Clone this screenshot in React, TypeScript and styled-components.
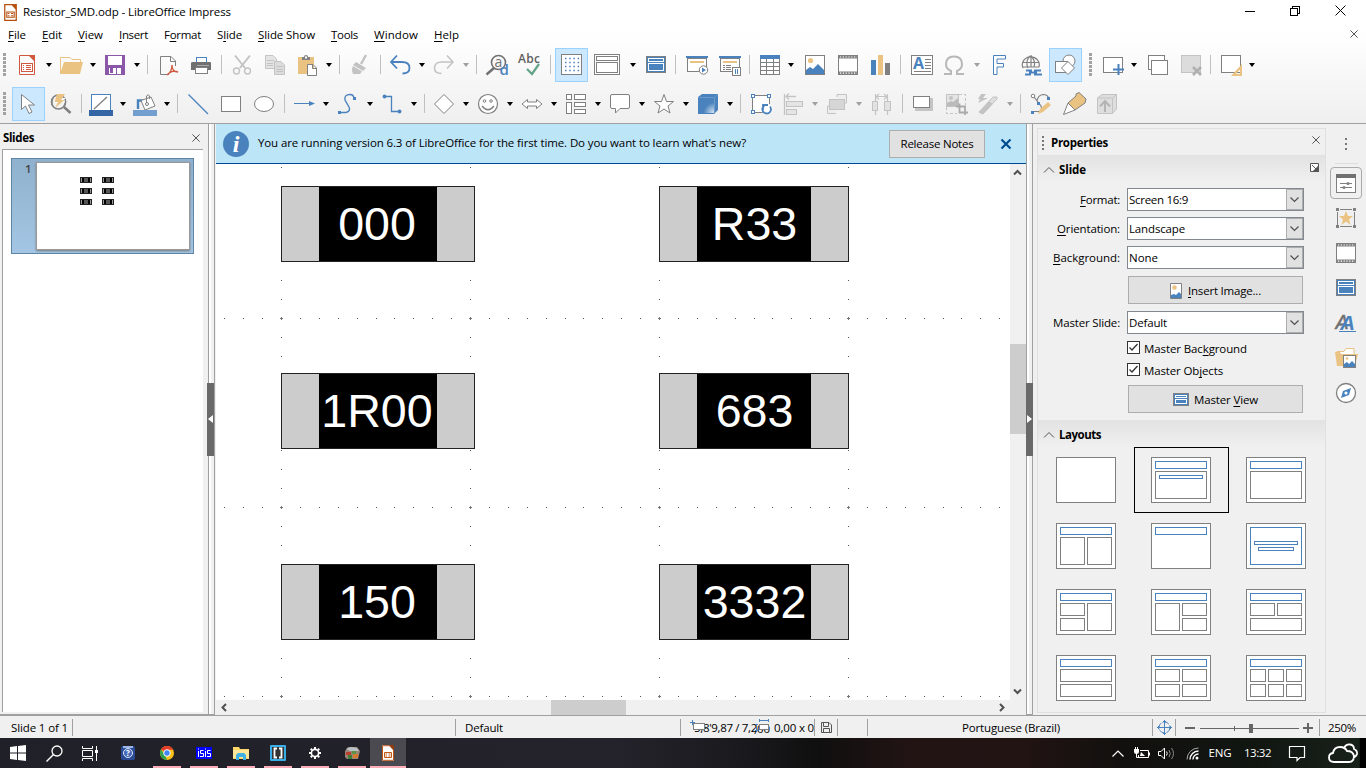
import React, { useLayoutEffect, useRef, useState } from 'react';
import styled, { createGlobalStyle } from 'styled-components';

const G = '#808080', B = '#4a82bd', T = '#eac282', D = '#c3c3c3', R = '#d0583f', LINE = '#a0a0a0';

const Global = createGlobalStyle`
  * { box-sizing: border-box; }
  body { margin: 0; overflow: hidden; background: #f0f0f0; color: #000;
    font-family: "Open Sans", "Noto Sans", sans-serif; font-size: 11.5px; line-height: 16px; }
  svg { display: block; flex: none; overflow: visible; }
  u { text-decoration-thickness: 1px; text-underline-offset: 1.5px; text-decoration-skip-ink: none; }
`;

/* ---------- text ---------- */
const TextBox = styled.span<{ $w?: number; $bold?: boolean }>`
  display: block; flex: none; white-space: pre;
  width: ${p => (p.$w ? p.$w + 'px' : 'auto')};
  font-weight: ${p => (p.$bold ? 700 : 400)};
`;
/* Text whose tracking is adjusted so that it fills the width w; "_" marks the mnemonic. */
function Text({ children, w, bold }: { children: string; w: number; bold?: boolean }) {
  const ref = useRef<HTMLSpanElement>(null);
  const [ls, setLs] = useState(0);
  useLayoutEffect(() => {
    if (ref.current) setLs((w - ref.current.getBoundingClientRect().width) / (ref.current.textContent || ' ').length);
  }, [w]);
  const i = children.indexOf('_');
  return (
    <TextBox $w={w} $bold={bold}>
      <span ref={ref} style={{ letterSpacing: ls }}>
        {i < 0 || children.includes('SMD') ? children : <>{children.slice(0, i)}<u>{children[i + 1]}</u>{children.slice(i + 2)}</>}
      </span>
    </TextBox>
  );
}

/* ---------- drawing helpers ---------- */
const P = ({ d, s = G, f = 'none', w = 1 }: { d: string; s?: string; f?: string; w?: number }) => (
  <path d={d} stroke={s} fill={f} strokeWidth={w} />
);
const Q = ({ x, y, w, h, s = G, f = '#fff', sw = 1 }: { x: number; y: number; w: number; h: number; s?: string; f?: string; sw?: number }) => (
  <rect x={x} y={y} width={w} height={h} stroke={s} fill={f} strokeWidth={sw} shapeRendering="crispEdges" />
);
const filmIcon = (
  <>
    <Q x={2.5} y={2.5} w={19} h={19} />
    <P d="M3 4H22M3 20H22" w={3} />
    <path d="M4 4H21M4 20.2H21" stroke="#fff" strokeWidth="1.2" strokeDasharray="1.2 1.6" />
  </>
);
const masterIcon = (
  <>
    <Q x={2.5} y={4.5} w={19} h={16} f={B} />
    <Q x={4.5} y={6.5} w={15} h={3} s="#fff" f={B} />
    <Q x={4.5} y={11.5} w={15} h={7} s="#fff" f={B} />
  </>
);

const icons: Record<string, React.ReactNode> = {
  new: <><P d="M13 3.5H3.5V22.5H18.5V9" s={R} /><path d="M12 3H19V10Z" fill={R} /><Q x={5.5} y={11.5} w={11} h={8} s={R} /><P d="M7 13.5H8M10 13.5H15M7 15.5H8M10 15.5H15M7 17.5H8M10 17.5H15" s={R} /></>,
  open: <><P d="M.5 21V5.500H10L12 7.500H20.500V10" s={T} /><path d="M0 22L4 10H23L20 22Z" fill={T} /></>,
  save: <><path d="M1 3H21V23H1Z" fill="#8b57a8" /><path d="M4 4H18V13H4Z" fill="#fff" /><path d="M5 16H17V23H5Z" fill="#fff" /><path d="M6 16H9V21H6Z M12 16H13V23H12Z" fill="#8b57a8" /><path d="M5 22H17V23H5Z" fill="#8b57a8" /></>,
  pdf: <><P d="M13 22.5H4.500V4.500H15L19.500 9V14M14.500 4.500V9.500H19.500" f="none" /><P d="M11 23C14 21 16 17 16 13C16 18 19 20 22 20C18 18 14 20 11 23Z" s={R} w={1.3} /></>,
  print: <><Q x={7.5} y={5.5} w={10} h={5} s={B} /><path d="M2 11Q2 10 4 10H21Q22 10 22 11V18H2Z" fill="#707070" /><Q x={6.5} y={15.5} w={12} h={6} s="#808080" /><P d="M8 13.500H20" s="#aaa" /></>,
  cut: <><P d="M5 3.500L15 16M20 3.500L10 16" s={D} w={2} /><circle cx="6.500" cy="19" r="3" stroke={D} fill="none" strokeWidth="1.400" /><circle cx="17.500" cy="19" r="3" stroke={D} fill="none" strokeWidth="1.400" /></>,
  copy: <><P d="M2.500 3.500H10L13.500 7V16.500H2.500Z" s={D} f="#e4e4e4" /><P d="M11.500 9.500H18L21.500 13V22.500H11.500Z" s={D} f="#dcdcdc" /><P d="M4 8.500H11M4 11.500H10M4 13.500H10M13.500 14.500H20M13.500 17.500H20M13.500 19.500H20" s={D} /></>,
  paste: <><path d="M2 5H18V22H2Z" fill={T} /><path d="M6 8V5H8Q8 3 10 3Q12 3 12 5H14V8Z" fill={G} /><rect x="9" y="4.500" width="2" height="2" fill="#fff" /><P d="M11.500 12.500H17L20.500 16V23.500H11.500ZM16.500 12.500V16.500H20.500" f="#fff" /></>,
  brush: <><P d="M18 3L13 12" s={D} w={2.5} /><path d="M8 10L18 16L15 19L5 13Z" fill={D} /><path d="M5 14L14 19.500L12 22H5Q3 17 5 14Z" fill={D} /></>,
  undo: <P d="M2 10H13C19 10 20.500 13 20.500 16C20.500 20 18 21.500 13.500 21.500M8 3.500L2 10L8 16.500" s={B} w={1.8} />,
  redo: <P d="M20 10H9C3 10 1.500 13 1.500 16C1.500 20 4 21.500 8.500 21.500M14 3.500L20 10L14 16.500" s={D} w={1.5} />,
  find: <><circle cx="13.500" cy="10.500" r="7" stroke="#707070" fill="none" strokeWidth="1.600" /><P d="M9 16L1.500 22.500" s="#707070" w={2.4} /><text x="9.500" y="15" fontSize="14" fill="#707070">a</text><text x="14.500" y="23" fontSize="15" fontWeight="600" fill={B}>d</text></>,
  abc: <><text x="0" y="11" fontSize="12" fontWeight="600" fill="#606060" textLength="22">Abc</text><P d="M9 17L14 22L21 12" s="#63a387" w={2.2} /></>,
  grid: <><Q x={2.5} y={2.5} w={20} h={20} />{[5, 9, 13, 17].map(y => <path key={y} d={`M6 ${y + 1.5}H21`} stroke={B} strokeWidth="1.500" strokeDasharray="1.500 2.700" />)}</>,
  views: <><Q x={2.5} y={2.5} w={25} h={20} /><Q x={4.5} y={4.5} w={21} h={4} /><Q x={4.5} y={10.5} w={21} h={10} /></>,
  master: <g transform="translate(1 0)">{masterIcon}</g>,
  play: <><path d="M2 4H24V6H2Z" fill={B} /><Q x={3.5} y={6.5} w={19} h={13} /><path d="M6 9H20V11H6Z" fill={T} /><circle cx="19.500" cy="18" r="4.200" stroke={G} fill="#fff" /><path d="M18 15.500L22 18L18 20.500Z" fill={B} /></>,
  playp: <><path d="M2 4H24V6H2Z" fill={B} /><Q x={3.5} y={6.5} w={19} h={13} /><path d="M6 9H20V11H6Z" fill={T} /><P d="M6 13.500H8M9 13.500H14M6 15.500H8M9 15.500H14M6 17.500H8M9 17.500H14" /><Q x={15.5} y={15.500} w={8} h={8} /><P d="M18.500 17V22M20.500 17V22" s={B} /></>,
  table: <><Q x={2.5} y={3.500} w={19} h={19} /><path d="M2 3H22V7H2Z" fill={B} /><P d="M3 10.500H21M3 14.500H21M3 18.500H21M8.500 7V22M15.500 7V22" /></>,
  image: <><Q x={3.5} y={3.5} w={19} h={19} /><circle cx="8.500" cy="8.500" r="2.600" fill={T} /><path d="M4 22V18L8 15L11 17L16 12L22 18V22Z" fill={B} /></>,
  film: <g transform="translate(1 1)">{filmIcon}</g>,
  filmtab: filmIcon,
  chart: <><path d="M3 8H8V23H3Z" fill={B} /><path d="M10 3H15V23H10Z" fill={T} /><path d="M17 11H22V23H17Z" fill={G} /></>,
  textbox: <><Q x={2.5} y={3.500} w={21} h={19} /><text x="4" y="17" fontSize="16" fontWeight="700" fill={B}>A</text><P d="M16 7.500H22M16 10.500H22M16 13.500H22M16 16.500H22M5 19.500H22" /></>,
  omega: <P d="M2 22H9V19Q4 17 4 12Q4 4.500 12 4.500Q20 4.500 20 12Q20 17 15 19V22H22" s="#b8b8b8" w={2} />,
  font: <P d="M6.500 3.500H18.500V7H10V11.500H16.500V15H10V22.500H6.500Z" s={B} f="#fff" />,
  link: <><P d="M3 16A8.500 8 0 1 1 19 15M3 10.500H19M3 15H19M8 16Q5 9 10 4M14 15Q16 9 11 4M11 3V15" w={1.2} /><path d="M3 16H24V24H3Z" fill="#f8f8f8" /><P d="M6 18.500H12M14 18.500H21M5 22.500H11M14 22.500H22M9 20.500H17" s={B} w={1.8} /></>,
  shapes: <><circle cx="16" cy="9" r="6" stroke={G} fill="#fff" /><Q x={2.5} y={9.500} w={12} h={11} /><P d="M15 9.500L21.500 16L15 22.500L8.500 16Z" f="#fff" /></>,
  newslide: <><Q x={2.5} y={5.500} w={19} h={15} /><P d="M17.500 12V23M12 17.500H23" s={B} w={2} /></>,
  dup: <><Q x={3.5} y={3.5} w={16} h={14} /><Q x={6.5} y={8.5} w={16} h={14} /></>,
  del: <><Q x={3.5} y={3.5} w={19} h={17} s={D} f="#dcdcdc" /><P d="M15 15L23 23M23 15L15 23" s="#b0b0b0" w={2.6} /></>,
  layout: <><Q x={2.5} y={3.5} w={19} h={17} /><path fillRule="evenodd" d="M12 24H23V12ZM17 22L21 17.500V22Z" fill={T} /></>,
  pointer: <P d="M5.500 3.500V18.500L9.500 15L13 22.500L16 21L12.500 14H18.500Z" f="#fff" />,
  zoom: <><circle cx="9.500" cy="11" r="7" stroke={G} fill="none" strokeWidth="1.600" /><path d="M5 7H16V12H5Z" fill="#fafafa" /><P d="M4 7Q2 10 3 14M16 8Q17.500 12 15 15" w={1.4} /><P d="M15 16L21.500 22" w={2.6} /><path d="M8 3H16L12 9H15.500L6 17L9 11H5.500Z" fill={T} /></>,
  linecol: <><Q x={1.5} y={3.5} w={19} h={16} s={B} /><P d="M4 18L17 6" w={1.3} /><path d="M-1 19H23V25H-1Z" fill="#3465a4" /></>,
  fill: <><P d="M4 18V9.500H10" s={B} w={2.4} /><P d="M7 9.500L17 6L21 15L11 19Z" f="#fff" /><P d="M12.500 12V5Q14.500 2.500 15.500 5V8" /><circle cx="13" cy="13" r="1.500" stroke={G} fill="#fff" /><path d="M-1 19H23V25H-1Z" fill="#729fcf" /></>,
  line: <P d="M2.500 3.500L22 23" s={B} w={1.2} />,
  rect: <Q x={2.500} y={5.500} w={19} h={15} />,
  ellipse: <ellipse cx="12" cy="13" rx="9.500" ry="7.500" fill="#fff" stroke={G} />,
  arrow: <><P d="M1 12.500H18" s={B} /><path d="M16 10L22 12.500L16 15Z" fill={B} /></>,
  curve: <><P d="M3 21.500H9Q14 20 12 16L8 9Q7 3.500 13 3.500Q17 3.500 17 8" s={B} w={1.4} /><path d="M1 20H4V23H1ZM16 6H19V9H16Z" fill={B} /></>,
  conn: <><P d="M3 5.500H10.500V20.500H18" s={B} w={1.3} /><circle cx="3.500" cy="5.500" r="1.900" fill={B} /><circle cx="18.500" cy="20.500" r="1.900" fill={B} /></>,
  diamond: <P d="M11 3.500L20.500 13L11 22.500L1.500 13Z" f="#fff" />,
  smile: <><circle cx="11" cy="13" r="9.500" stroke={G} fill="#fff" strokeWidth="1.200" /><circle cx="7.500" cy="10" r="1.300" stroke={G} fill="#fff" /><circle cx="14" cy="10" r="1.300" stroke={G} fill="#fff" /><P d="M5 15Q11 22.500 17 15" w={1.3} /></>,
  dbl: <P d="M1 13L6.500 8.500V11H15.500V8.500L21 13L15.500 17.500V15H6.500V17.500Z" f="#fff" />,
  flow: <><Q x={1.5} y={3.500} w={5} h={5} /><Q x={9.500} y={3.500} w={11} h={5} /><Q x={1.5} y={11.500} w={5} h={11} /><Q x={9.500} y={11.500} w={11} h={4} /><Q x={9.500} y={18.500} w={11} h={4} /></>,
  bubble: <P d="M3 3.500H19Q20.500 3.500 20.500 5V16Q20.500 17.500 19 17.500H11L6.500 22V17.500H3Q1.500 17.500 1.500 16V5Q1.500 3.500 3 3.500Z" f="#fff" />,
  star: <P d="M11 3.500L13.500 10.500H20.500L15 15L17 22L11 18L5 22L7 15L1.500 10.500H8.500Z" f="#fff" />,
  cube: <><defs><radialGradient id="cg" cx="1" cy="1" r=".7"><stop offset="0" stopColor="#dbe8f5" /><stop offset="1" stopColor={B} /></radialGradient></defs><path d="M1 6L5 3H21V19L17 23H1Z" fill={B} /><path d="M2 7H17V22H2Z" fill="url(#cg)" /><P d="M1 6.500H17.500V23M17.500 6.500L21 3" s="#79a4d0" w={.7} /></>,
  rotate: <><Q x={3.500} y={4.500} w={17} h={17} /><Q x={2.500} y={3.500} w={3} h={3} s={B} /><Q x={18.500} y={3.500} w={3} h={3} s={B} /><Q x={2.500} y={19.500} w={3} h={3} s={B} /><circle cx="18" cy="18" r="5.500" fill="#fff" /><P d="M15.500 14.500A4.300 4.300 0 1 0 21 15.500M14 19V14H19" s={B} w={1.8} /></>,
  align: <><P d="M2.500 3V24" s={D} w={1.3} /><P d="M4 5.500H14M7 2.500L4 5.500L7 8.500" s={D} w={1.3} /><Q x={4.500} y={10.500} w={16} h={5} s={D} f="#e4e4e4" /><Q x={4.500} y={18.500} w={10} h={5} s={D} f="#e4e4e4" /></>,
  arrange: <><P d="M11 6V3.500H20.500V12H18M10 22.500H1.500V15H4" s={D} f="#eee" /><Q x={3.500} y={8.500} w={15} h={10} s={D} f="#d6d6d6" /></>,
  dist: <><P d="M5.500 3V24M17.500 3V24M6 5.500H17M9 3L6 6L9 8.500M14 3L17 6L14 8.500" s={D} w={1.2} /><Q x={2.500} y={10.500} w={5} h={9} s={D} f="#e2e2e2" /><Q x={14.500} y={10.500} w={6} h={9} s={D} f="#e2e2e2" /></>,
  shadow: <><path d="M4 7H22V20H4Z" fill="#c4c4c4" /><Q x={2.500} y={5.500} w={16} h={11} /></>,
  crop: <><Q x={2.500} y={3.500} w={12} h={12} s={D} f="#e4e4e4" /><circle cx="7" cy="7" r="2" fill={D} /><path d="M3 15V12L7 10L9 11L14 7V15Z" fill="#bbb" /><path d="M15 3.500H21.500V14M2.500 16V22.500H13" stroke={D} fill="none" strokeDasharray="3 2" /><P d="M12 15.500H21V24M15.500 12.500V21.500H24" s="#aaa" w={1.8} /></>,
  filter: <><path d="M4 3H9L6 7H11L1 12L3 8H1Z" fill={D} /><P d="M2 21L16 6L20 6L20 8L6 23Z" s={D} f="#ddd" /><P d="M2 21L12 11L15 13L6 23Z" s={D} f={D} /></>,
  points: <><circle cx="4" cy="5" r="1.800" stroke={G} fill="#fff" /><P d="M5 6L12 15Q14 20 10 20.500H4M8 10Q9 4 14 3.500Q19 3.500 20 8" w={1.2} /><path d="M8 11H11V14H8ZM18 6H21V9H18ZM2 20H5V23H2Z" fill={B} /><path d="M9 23L11 18L19 11L22 14L14 21Z" fill={T} /></>,
  glue: <><P d="M14 3L17 1.500L24 8L23 12L13 19L6 12L14 5Z" f={T} /><P d="M6 12L13 19L1.500 23.500Z" f="#fff" /></>,
  extrude: <><P d="M2.500 7L7 3.500H21.500V18L17.500 22.500H2.500ZM2.500 7H17.500V22M17.500 7L21.500 3.500" s={D} f="#dedede" /><P d="M10 21V11M5 15.500L10 10L15 15.500" s="#b4b4b4" w={2} /></>,
  props: <><Q x={2.5} y={3.500} w={19} h={18} /><path d="M2 3H22V7H2Z" fill="#707070" /><P d="M6 12.500H18M6 16.500H18" /><circle cx="14" cy="12.500" r="1.600" fill={G} /><circle cx="10" cy="16.500" r="1.600" fill={G} /></>,
  anim: <><P d="M3.500 6V20M20.500 6V20M6 3.500H18M6 20.500H18" /><path d="M2 2H5V5H2ZM19 2H22V5H19ZM2 19H5V22H2ZM19 19H22V22H19Z" fill={G} /><path d="M12 5L14 10H19L15 13.500L16.500 19L12 15.500L7.500 19L9 13.500L5 10H10Z" fill={T} /></>,
  styles: <><text x="1.500" y="17.500" fontFamily="Liberation Sans" fontSize="20" fontStyle="italic" fontWeight="400" stroke="#707070" strokeWidth=".5" fill="#707070" textLength="13" lengthAdjust="spacingAndGlyphs">A</text><text x="6" y="18.500" fontFamily="Liberation Sans" fontSize="21" fontStyle="italic" fontWeight="700" fill={B} textLength="15" lengthAdjust="spacingAndGlyphs">A</text><P d="M5 20.500H22" s={B} /></>,
  gallery: <><P d="M3 8V5.500H10L12 2.500H20V8" s={T} f="#fff" /><path d="M1 6H6L7 8H24L21 20H3Z" fill={T} /><Q x={9.500} y={9.500} w={12} h={12} /><circle cx="13" cy="12.500" r="1.300" fill={T} /><path d="M10 21V18L13 16L15 18L18 15L21 18V21Z" fill={B} /></>,
  nav: <><circle cx="12" cy="12" r="9.500" stroke={G} fill="#fff" strokeWidth="1.300" /><path d="M17 7L15 14L7 17L9 10Z" fill={B} /><circle cx="12" cy="12" r="1.600" fill="#fff" /></>,
  mastertab: <g transform="translate(0 -1)">{masterIcon}</g>,
};
const Icon = ({ n }: { n: string }) => <svg width="25" height="25" viewBox="0 0 25 25">{icons[n]}</svg>;
const Cross = ({ size, c, w = 1 }: { size: number; c: string; w?: number }) => (
  <svg width={size} height={size} viewBox="0 0 10 10"><path d="M.5 .5L9.500 9.500M9.500 .5L.5 9.500" stroke={c} strokeWidth={(w * 10) / size} /></svg>
);

/* ---------- window frame ---------- */
const Window = styled.div`width: 1366px; height: 768px; display: flex; flex-direction: column; overflow: hidden;`;
const Top = styled.div`
  height: 124px; flex: none; border-bottom: 1px solid ${LINE};
  background: linear-gradient(#fff 0 24px, #fefefe 40px, #efefef);
`;
const TitleBar = styled.div`height: 24px; display: flex; align-items: center; padding: 0 20px 0 4px; gap: 6px;`;
const WinButtons = styled.div`margin-left: auto; display: flex; align-items: center; gap: 35px; padding-bottom: 3px;`;
const MenuBar = styled.div`height: 21px; display: flex; align-items: center; gap: 16px; padding: 1px 8px 0 8px;`;
const MenuClose = styled.div`margin-left: auto; padding-bottom: 3px;`;
const Toolbar = styled.div`height: 39px; padding: 3px 0 0 3px; display: flex; align-items: flex-start;`;
const Handle = styled.div<{ $inner?: boolean }>`
  width: 3px; height: 23px; flex: none; margin: ${p => (p.$inner ? '5px 5px 0 7px' : '5px 6px 0 0')};
  background: repeating-linear-gradient(#a2a2a2 0 3px, transparent 3px 4px);
`;
const ToolButton = styled.div<{ $on?: boolean; $w?: number }>`
  width: ${p => p.$w || 33}px; height: 34px; flex: none; padding: 3px;
  border: 1px solid ${p => (p.$on ? '#99d1ff' : 'transparent')};
  background: ${p => (p.$on ? '#cce8ff' : 'transparent')};
`;
const Drop = styled.div<{ $off?: boolean; $w?: number }>`
  width: ${p => p.$w || 11}px; height: 34px; flex: none; display: flex; align-items: center; padding-left: ${p => (p.$w ? p.$w - 9.5 : 1)}px;
  &::before { content: ''; border: 3px solid transparent; border-top: 4px solid ${p => (p.$off ? '#a0a0a0' : '#000')}; border-bottom: 0; }
`;
const Sep = styled.div`width: 1px; height: 19px; margin: 7px 4px 0 3px; background: #c0c0c0; flex: none;`;

const bar1 = 'new v open v save v | pdf print | cut copy paste v | brush | undo v redo x | find abc | grid* views V master | play playp | table v image film chart | textbox omega X font link shapes* # newslide v dup del | layout v';
const bar2 = 'pointer* zoom | linecol v fill v | line rect ellipse | arrow v curve v conn v | diamond v smile v dbl v flow v bubble v star v cube v | rotate align x arrange x dist | shadow crop filter x | points glue extrude';
const Tools = ({ spec }: { spec: string }) => (
  <Toolbar>
    <Handle />
    {spec.split(' ').map((t, i) => {
      if (t === '|') return <Sep key={i} />;
      if (t === '#') return <Handle key={i} $inner />;
      if (t === 'v' || t === 'x') return <Drop key={i} $off={t === 'x'} />;
      if (t === 'V') return <Drop key={i} $w={13} />;
      if (t === 'X') return <Drop key={i} $off $w={12} />;
      const n = t.replace('*', '');
      return <ToolButton key={i} $on={t !== n} $w={n === 'views' ? 38 : 33}><Icon n={n} /></ToolButton>;
    })}
  </Toolbar>
);

/* ---------- middle ---------- */
const Middle = styled.div`height: 592px; flex: none; display: flex; border-bottom: 1px solid ${LINE};`;
const SlidesPane = styled.div`width: 208px; height: 591px; display: flex; flex-direction: column; padding: 1px 0 0 2px; border-bottom: 1px solid ${LINE};`;
const PaneHead = styled.div`height: 24px; display: flex; justify-content: space-between; align-items: center; padding: 1px 8px 0 1px;`;
const SlideList = styled.div`width: 201px; height: 563px; background: #fff; border-left: 1px solid ${LINE}; border-top: 1px solid ${LINE}; padding: 8px;`;
const SlideItem = styled.div`
  width: 183px; height: 96px; border: 1px solid #5d85a6; background: linear-gradient(#8fb1cd, #a3c6e4);
  display: flex; justify-content: space-between; padding: 3px 3px 0 13px; color: #444; font-weight: 600; line-height: 13px;
`;
const Thumb = styled.div`width: 154px; height: 88px; background: #fff; border: 1px solid #999; box-shadow: 0 1px 2px #777; padding: 14px 0 0 43px; display: grid; grid-template-columns: 12px 12px; grid-auto-rows: 6px; gap: 5px 10px; align-content: start;`;
const Chip = styled.div`background: linear-gradient(90deg, #999 1px, #000 1px 3px, #555 3px 7px, #000 7px 9px, #999 9px); border: 1px solid #222;`;
const Splitter = styled.div`width: 7px; height: 591px; flex: none; border: solid ${LINE}; border-width: 0 1px; background: linear-gradient(90deg, #fff 2px, #f0f0f0 2px); display: flex; align-items: center; border-bottom-width: 1px;`;
const Grip = styled.div<{ $right?: boolean }>`
  width: 7px; height: 73px; margin: 0 -1px 0 ${p => (p.$right ? -1 : -2)}px; flex: none; background: #696969; display: flex; align-items: center; justify-content: center;
  &::before { content: ''; border: 4px solid transparent; ${p => (p.$right ? 'border-left: 5px solid #fff; border-right: 0' : 'border-right: 5px solid #fff; border-left: 0')}; }
`;
const Editor = styled.div`width: 811px; flex: none; display: flex; flex-direction: column; padding-left: 1px;`;
const InfoBar = styled.div`height: 40px; flex: none; background: #bde5f8; border-bottom: 1px solid #004b8f; display: flex; align-items: center; padding: 0 15px 0 7px;`;
const InfoText = styled.div`margin-left: 9px; flex: 1; padding-bottom: 1px;`;
const Button = styled.div<{ $w: number; $h: number; $gap?: number }>`
  width: ${p => p.$w}px; height: ${p => p.$h}px; border: 1px solid #adadad; background: #e1e1e1; padding-top: 1px;
  display: flex; align-items: center; justify-content: center; gap: ${p => p.$gap || 0}px;
`;
const InfoClose = styled.div`margin-left: 16px;`;
const CanvasRow = styled.div`height: 536px; display: flex;`;
const Canvas = styled.div`width: 794px; height: 536px; background: #fff; position: relative; overflow: hidden;`;
const Resistor = styled.div<{ $x: number; $y: number; $w: number; $right: number }>`
  position: absolute; left: ${p => p.$x}px; top: ${p => p.$y}px; width: ${p => p.$w}px; height: 76px;
  border: 1px solid #222; background: #ccc; padding: 0 ${p => p.$right}px 0 37px;
`;
const Body = styled.div<{ $pl: number; $pr: number }>`
  height: 100%; background: #000; color: #fff; display: flex; align-items: center; justify-content: center; white-space: nowrap;
  font: 46.6px/74px "Liberation Sans", Arial, sans-serif; margin: 0 -2px 0 0; padding: 0 ${p => p.$pr}px 0 ${p => p.$pl}px;
`;
const VScroll = styled.div`width: 16px; height: 536px; background: #f0f0f0; display: flex; flex-direction: column; align-items: center; padding: 4px 1px 0 0;`;
const VThumb = styled.div`width: 16px; height: 90px; background: #cdcdcd; margin: 167px -1px 253px 0; flex: none;`;
const HScroll = styled.div`height: 15px; display: flex; align-items: center; padding-left: 4px;`;
const HThumb = styled.div`width: 75px; height: 15px; background: #cdcdcd; margin: 0 371px 0 322px; flex: none;`;
const Chev = ({ d, w = 2, c = '#505050' }: { d: string; w?: number; c?: string }) => <svg width="9" height="9" viewBox="0 0 9 9"><path d={d} fill="none" stroke={c} strokeWidth={w} /></svg>;

const parts = [
  [65, 22, '000'], [443, 22, 'R33'], [65, 209, '1R00'], [443, 209, '683'], [65, 400, '150'], [443, 400, '3332'],
] as const;
const dots: React.ReactNode[] = [];
[154, 343, 532].forEach(y => {
  for (let i = -3; i < 39; i++) dots.push(<rect key={`h${y}${i}`} x={Math.round(65 + i * 18.9)} y={y} width="1" height="1" />);
});
[65, 254, 443, 632].forEach(x => {
  for (let j = -8; j < 21; j++) dots.push(<rect key={`v${x}${j}`} x={x} y={Math.round(154 + j * 18.9)} width="1" height="1" />);
  [154, 343, 532].forEach(y => dots.push(<path key={`c${x}${y}`} fill="#777" d={`M${x - 1} ${y}h3v1h-3zM${x} ${y - 1}h1v3h-1z`} />));
});

/* ---------- sidebar ---------- */
const Sidebar = styled.div`width: 289px; height: 585px; margin: 4px 0 0 4px; border: 1px solid #e0e0e0; flex: none;`;
const SideTitle = styled.div`height: 26px; display: flex; align-items: center; padding: 1px 5px 0 4px;`;
const Dots = styled.div`width: 2px; height: 14px; background: repeating-linear-gradient(#777 0 2px, transparent 2px 4px); margin-right: 7px;`;
const Push = styled.div`margin-left: auto; padding-bottom: 5px;`;
const Section = styled.div`height: 27px; background: linear-gradient(#e2e2e2, #f0f0f0); display: flex; align-items: center; padding: 2px 6px 0 6px; gap: 5px;`;
const Form = styled.div`height: 238px; padding: 6px 21px 0 0; display: flex; flex-direction: column; align-items: flex-end;`;
const Row = styled.div<{ $mb?: number }>`display: flex; align-items: center; gap: 7px; margin-bottom: ${p => p.$mb ?? 6}px;`;
const Combo = styled.div`width: 177px; height: 23px; border: 1px solid #828790; background: #fff; display: flex; align-items: center; justify-content: space-between; padding-left: 1px;`;
const ComboBtn = styled.div`width: 17px; height: 21px; background: #e1e1e1; border: 1px solid #adadad; display: flex; align-items: center; justify-content: center;`;
const BtnRow = styled.div<{ $mb: number }>`margin: 1px 1px ${p => p.$mb}px 0;`;
const Check = styled.div<{ $mb: number }>`
  width: 177px; height: 13px; display: flex; align-items: center; gap: 4px; margin-bottom: ${p => p.$mb}px;
  > span { margin-top: 2px; }
`;
const CheckBox = styled.div`width: 13px; height: 13px; border: 1px solid #333; background: #fff;`;
const Layouts = styled.div`display: grid; grid-template-columns: repeat(3, 95px); grid-auto-rows: 66px; margin-left: 1px;`;
const LayoutCell = styled.div<{ $on?: boolean }>`border: 1px solid ${p => (p.$on ? '#000' : 'transparent')}; padding: 9px 0 0 16px;`;
const Tabs = styled.div`width: 40px; display: flex; flex-direction: column; align-items: center; padding-top: 14px;`;
const TabDots = styled.div`width: 2px; height: 12px; background: repeating-linear-gradient(#777 0 2px, transparent 2px 5px);`;
const TabRule = styled.div`width: 23px; height: 1px; background: #ddd; margin: 13px 0 3px;`;
const Tab = styled.div<{ $on?: boolean }>`width: 32px; height: 32px; padding: 3px; margin-bottom: 3px; border: 1px solid ${p => (p.$on ? '#aaa' : 'transparent')}; border-radius: 4px;`;

const boxes: number[][][] = [
  [], [[4, 14, 51, 27], [8, 18, 43, 3, 1]], [[4, 14, 51, 27]],
  [[4, 14, 24, 27], [31, 14, 24, 27]], [], [[4, 4, 51, 37, 1], [8, 18, 43, 3, 1], [12, 24, 35, 3, 1]],
  [[4, 14, 24, 12], [4, 29, 24, 12], [31, 14, 24, 27]], [[4, 14, 24, 27], [31, 14, 24, 12], [31, 29, 24, 12]], [[4, 14, 24, 12], [31, 14, 24, 12], [4, 29, 51, 12]],
  [[4, 14, 51, 12], [4, 29, 51, 12]], [[4, 14, 24, 12], [31, 14, 24, 12], [4, 29, 24, 12], [31, 29, 24, 12]],
  [[4, 14, 15, 12], [22, 14, 15, 12], [40, 14, 15, 12], [4, 29, 15, 12], [22, 29, 15, 12], [40, 29, 15, 12]],
];
const Field = ({ label, lw, value, vw, mb }: { label: string; lw: number; value: string; vw: number; mb?: number }) => (
  <Row $mb={mb}><Text w={lw}>{label}</Text><Combo><Text w={vw}>{value}</Text><ComboBtn><Chev d="M.5 2.500L4.500 6.500L8.500 2.500" w={1.2} /></ComboBtn></Combo></Row>
);
const Tick = () => <CheckBox><svg width="11" height="11"><path d="M1.500 5.500L4 8L9.500 2" stroke="#333" strokeWidth="1.300" fill="none" /></svg></CheckBox>;

/* ---------- status bar ---------- */
const Status = styled.div`height: 22px; flex: none; display: flex; align-items: center;`;
const Cell = styled.div<{ $w: number; $pl?: number; $end?: boolean }>`
  width: ${p => p.$w}px; height: 17px; flex: none; display: flex; align-items: center; padding: 2px 0 0 ${p => p.$pl || 0}px; overflow: hidden;
  border-right: ${p => (p.$end ? '0' : '1px solid ' + LINE)};
`;
const Glyph = styled.div`padding-bottom: 2px;`;
const Position = styled(Cell)`position: relative; gap: 17px;`;
const Overlay = styled.svg`position: absolute; left: 9px; top: 0;`;

/* ---------- task bar ---------- */
const Taskbar = styled.div`
  height: 30px; flex: none; display: flex; color: #fff;
  background: linear-gradient(90deg, #202028, #24232b 45%, #1c1b20 53%, #100f0f 60%, #231414 67%, #211413 75%, #12100e 82%, #111611 92%, #182119 99.500%, #000 99.600%);
`;
const Task = styled.div<{ $w?: number; $run?: boolean; $on?: boolean }>`
  width: ${p => p.$w || 37}px; height: 30px; flex: none; display: flex; align-items: center; justify-content: center;
  background: ${p => (p.$run ? `linear-gradient(#ffadb9, #ffadb9) center bottom / ${p.$on ? 36 : 28}px 2px no-repeat` : 'none')} ${p => (p.$on ? '#4a4a50' : '')};
`;
const Tray = styled.div`margin-left: auto; display: flex; align-items: center; padding-right: 7px;`;
const TrayItem = styled.div<{ $w: number; $ml?: number }>`width: ${p => p.$w}px; margin-left: ${p => p.$ml || 0}px; display: flex; justify-content: center; flex: none;`;

const Doc = () => (
  <svg width="16" height="16" viewBox="0 0 16 16"><path d="M2 .2H9.500L14 5V15.800H2Z" fill="#fff" /><path d="M2.500 .7H9.500L13.500 5V15.300H2.500Z" fill="#fff" stroke="#c15514" strokeWidth="1" /><path d="M9 0H14V5.500Z" fill="#8c3d10" /><path d="M4.500 7.500H11.500V12.500H4.500ZM5.500 9H7M8.500 9H10.500M5.500 11H7M8.500 11H10.500" stroke="#c15514" fill="none" /></svg>
);

export default function App() {
  const menus: [string, number][] = [['_File', 18], ['_Edit', 20], ['_View', 25], ['_Insert', 29], ['F_ormat', 37], ['S_lide', 25], ['_Slide Show', 57], ['_Tools', 27], ['_Window', 44], ['_Help', 25]];
  return (
    <Window>
      <Global />
      <Top>
        <TitleBar>
          <svg width="13" height="17" viewBox="2 0 12 16"><path d="M2.600 .6H9.500L13.400 5V15.400H2.600Z" fill="#fff" stroke="#b5500f" strokeWidth="1.200" /><path d="M9 0H14V5.500Z" fill="#b5500f" /><path d="M4.500 7.500H11.500V12.500H4.500ZM5.500 9H7M8.500 9H10.500M5.500 11H7M8.500 11H10.500" stroke="#b5500f" fill="none" /></svg>
          <Text w={208}>Resistor_SMD.odp - LibreOffice Impress</Text>
          <WinButtons>
            <svg width="10" height="10"><path d="M0 5.500H10" stroke="#000" /></svg>
            <svg width="10" height="10"><path d="M.5 2.500H7.500V9.500H.5ZM2.500 2V.5H9.500V7.500H8" stroke="#000" fill="none" shapeRendering="crispEdges" /></svg>
            <Cross size={11} c="#000" />
          </WinButtons>
        </TitleBar>
        <MenuBar>
          {menus.map(([m, w]) => <Text key={m} w={w}>{m}</Text>)}
          <MenuClose><Cross size={8} c="#555" /></MenuClose>
        </MenuBar>
        <Tools spec={bar1} />
        <Tools spec={bar2} />
      </Top>

      <Middle>
        <SlidesPane>
          <PaneHead><Text w={31} bold>Slides</Text><Cross size={8} c="#555" /></PaneHead>
          <SlideList>
            <SlideItem>1<Thumb>{parts.map(p => <Chip key={p[2]} />)}</Thumb></SlideItem>
          </SlideList>
        </SlidesPane>
        <Splitter><Grip /></Splitter>
        <Editor>
          <InfoBar>
            <svg width="26" height="26"><circle cx="13" cy="13" r="13" fill="#4a82bd" /><text x="13" y="21" textAnchor="middle" fontFamily="Liberation Serif, serif" fontStyle="italic" fontWeight="700" fontSize="24" fill="#fff">i</text></svg>
            <InfoText><Text w={488}>You are running version 6.3 of LibreOffice for the first time. Do you want to learn what's new?</Text></InfoText>
            <Button $w={96} $h={28}><Text w={73}>Release Notes</Text></Button>
            <InfoClose><Cross size={10} c="#004b8f" w={2.2} /></InfoClose>
          </InfoBar>
          <CanvasRow>
            <Canvas>
              <svg width="794" height="536" fill="#555" shapeRendering="crispEdges">{dots}</svg>
              {parts.map(([x, y, t]) => (
                <Resistor key={t} $x={x} $y={y} $w={x < 100 ? 194 : 190} $right={39}>
                  <Body $pl={x < 100 ? 0 : 1} $pr={x < 100 ? 2 : 0}>{t}</Body>
                </Resistor>
              ))}
            </Canvas>
            <VScroll><Chev d="M1 6.500L4.500 3L8 6.500" /><VThumb /><Chev d="M1 2.500L4.500 6L8 2.500" /></VScroll>
          </CanvasRow>
          <HScroll><Chev d="M6 1L2.500 4.500L6 8" /><HThumb /><Chev d="M3 1L6.500 4.500L3 8" /></HScroll>
        </Editor>
        <Splitter><Grip $right /></Splitter>
        <Sidebar>
          <SideTitle><Dots /><Text w={57} bold>Properties</Text><Push><Cross size={8} c="#555" /></Push></SideTitle>
          <Section>
            <svg width="10" height="6"><path d="M0 5.500L5 .5L10 5.500" stroke="#555" fill="none" /></svg>
            <Text w={27} bold>Slide</Text>
            <Push><svg width="9" height="9"><path d="M.5 .5H8.500V8.500H.5Z" fill="#fff" stroke="#555" /><path d="M9 2V9H2Z" fill="#555" /><path d="M2 2L6 6" stroke="#555" /></svg></Push>
          </Section>
          <Form>
            <Field label="_Format:" lw={40} value="Screen 16:9" vw={59} />
            <Field label="_Orientation:" lw={63} value="Landscape" vw={56} />
            <Field label="_Background:" lw={67} value="None" vw={29} />
            <BtnRow $mb={7}>
              <Button $w={175} $h={28} $gap={6}>
                <svg width="12" height="16"><path d="M.5 .5H11.500V15.500H.5Z" fill="#fff" stroke={G} /><circle cx="4.500" cy="4.500" r="2.300" fill={T} /><path d="M1 15V12L4 11L6 12L9 9L11 11V15Z" fill={B} /></svg>
                <Text w={73}>_Insert Image...</Text>
              </Button>
            </BtnRow>
            <Field label="Master Slide:" lw={67} value="Default" vw={38} mb={7} />
            <Check $mb={9}><Tick /><Text w={103}>Master Bac_kground</Text></Check>
            <Check $mb={8}><Tick /><Text w={79}>Master Ob_jects</Text></Check>
            <BtnRow $mb={7}>
              <Button $w={175} $h={28} $gap={5}>
                <svg width="16" height="13"><Q x={.5} y={.5} w={15} h={12} f={B} /><Q x={2.5} y={2.5} w={11} h={2} s="#fff" f={B} /><Q x={2.5} y={6.5} w={11} h={4} s="#fff" f={B} /></svg>
                <Text w={64}>Master _View</Text>
              </Button>
            </BtnRow>
          </Form>
          <Section>
            <svg width="10" height="6"><path d="M0 5.500L5 .5L10 5.500" stroke="#555" fill="none" /></svg>
            <Text w={42} bold>Layouts</Text>
          </Section>
          <Layouts>
            {boxes.map((bs, i) => (
              <LayoutCell key={i} $on={i === 1}>
                <svg width="60" height="46">
                  <Q x={.5} y={.5} w={59} h={45} />
                  {i !== 0 && i !== 5 && <Q x={4.5} y={4.5} w={51} h={7} s={B} />}
                  {bs.map((b, j) => <Q key={j} x={b[0] + .5} y={b[1] + .5} w={b[2]} h={b[3]} s={b[4] ? B : G} />)}
                </svg>
              </LayoutCell>
            ))}
          </Layouts>
        </Sidebar>
        <Tabs>
          <TabDots /><TabRule />
          {['props', 'anim', 'filmtab', 'mastertab', 'styles', 'gallery', 'nav'].map((n, i) => <Tab key={n} $on={i === 0}><Icon n={n} /></Tab>)}
        </Tabs>
      </Middle>

      <Status>
        <Cell $w={73} $pl={11}><Text w={57}>Slide 1 of 1</Text></Cell>
        <Cell $w={383} />
        <Cell $w={225} $pl={9}><Text w={38}>Default</Text></Cell>
        <Position $w={134} $pl={13}>
          <Text w={63}>5,8'9,87 / 7,2</Text><Text w={40}>0,00 x 0</Text>
          <Overlay width="90" height="17">
            <Q x={3.5} y={4.5} w={11} h={6} /><path d="M0 3.500H5M2.500 1V6" stroke={B} />
            <text x="64" y="14" fontSize="11.500" fill="#000">,00</text>
            <Q x={69.5} y={5.5} w={9} h={5} /><path d="M69 1.500H79M69.500 0V3M78.500 0V3M66.500 5V12M65 5.500H68M65 11.500H68" stroke={B} fill="none" />
          </Overlay>
        </Position>
        <Cell $w={23} $pl={6}>
          <Glyph><svg width="11" height="11"><path d="M.5 .5H8L10.500 3V10.500H.5ZM2.500 .5V4.500H7.500V.5M2.500 10.500V6.500H8.500V10.500" stroke="#555" fill="none" /></svg></Glyph>
        </Cell>
        <Cell $w={30} />
        <Cell $w={285} $pl={94}><Text w={98}>Portuguese (Brazil)</Text></Cell>
        <Cell $w={23} $pl={4}>
          <Glyph><svg width="15" height="15"><circle cx="7.500" cy="7.500" r="5.500" stroke={B} fill="none" strokeDasharray="6 2" /><path d="M7.500 0V15M0 7.500H15M5.500 2.500L7.500 .5L9.500 2.500M5.500 12.500L7.500 14.500L9.500 12.500M2.500 5.500L.5 7.500L2.500 9.500M12.500 5.500L14.500 7.500L12.500 9.500" stroke={B} fill="none" /></svg></Glyph>
        </Cell>
        <Cell $w={144} $pl={9}>
          <svg width="129" height="12" shapeRendering="crispEdges"><path d="M0 6H10M118 6H128M123 1V11" stroke="#666" strokeWidth="2" /><path d="M15 6.500H114M49.500 4V9" stroke="#666" /><path d="M64 2H68V11H64Z" fill="#666" /></svg>
        </Cell>
        <Cell $w={46} $pl={8} $end><Text w={28}>250%</Text></Cell>
      </Status>

      <Taskbar>
        <Task $w={36}><svg width="16" height="16"><path d="M0 2L7 1V7.500H0ZM8 1L16 0V7.500H8ZM0 8.500H7V15L0 14ZM8 8.500H16V16L8 15Z" fill="#fff" /></svg></Task>
        <Task $w={36}><svg width="17" height="17"><circle cx="11" cy="6" r="5" stroke="#fff" strokeWidth="1.300" fill="none" /><path d="M7.500 9.500L.5 16.500" stroke="#fff" strokeWidth="1.400" /></svg></Task>
        <Task $w={36}><svg width="17" height="15"><path d="M.5 0V2.500H10.500V0M.5 4.500H10.500V10.500H.5ZM.5 15V12.500H10.500V15M14.500 0V15" stroke="#fff" fill="none" /><path d="M13 4H16V7H13Z" fill="#fff" /></svg></Task>
        <Task $w={40}><svg width="14" height="16"><rect y="1" width="14" height="14" rx="2" fill="#2b4a94" /><path d="M2 1H12V3H2Z" fill="#9db6e8" /><circle cx="7" cy="8" r="4.500" fill="#4468b8" stroke="#dde6fa" /><text x="7" y="11" fontSize="8" fontWeight="700" textAnchor="middle" fill="#fff">?</text></svg></Task>
        <Task $run $w={37}><svg width="14" height="14" viewBox="0 0 14 14"><circle cx="7" cy="7" r="7" fill="#fbc116" /><path d="M7 7L1 3.500A7 7 0 0 1 13.200 3.800H7Z" fill="#e33b2e" /><path d="M1 3.500L5 9L7 14A7 7 0 0 1 1 3.500Z" fill="#2fa04f" /><circle cx="7" cy="7" r="3.300" fill="#4285f4" stroke="#fff" /></svg></Task>
        <Task $run><svg width="16" height="12"><path d="M0 0H16V12H0Z" fill="#00f" /><path d="M2.500 4V10M2.500 1.500V2.500M7.500 3.500H4.500V6.500H7.500V9.500H4M9.500 4V10M9.500 1.500V2.500M14.500 3.500H11.500V6.500H14.500V9.500H11" stroke="#fff" fill="none" /></svg></Task>
        <Task $run><svg width="16" height="14"><path d="M0 1H6L7 3H16V13H0Z" fill="#ffd869" /><path d="M0 4H16V12H0Z" fill="#ffe699" /><path d="M3 14V9L5 7H11L13 9V14H10V11H6V14Z" fill="#3fb1e5" /></svg></Task>
        <Task $run><svg width="16" height="16"><rect width="16" height="16" rx="1" fill="#38aee6" /><path d="M2 2H14V14H2Z" fill="#333" /><path d="M7 3.500H4.500V12.500H7M9 3.500H11.500V12.500H9" stroke="#fff" strokeWidth="1.800" fill="none" /></svg></Task>
        <Task $run><svg width="14" height="14" viewBox="-7 -7 14 14"><circle r="3.600" stroke="#fff" strokeWidth="1.600" fill="none" />{[0, 45, 90, 135, 180, 225, 270, 315].map(a => <path key={a} d="M0 -4V-6" stroke="#fff" strokeWidth="2" transform={`rotate(${a})`} />)}</svg></Task>
        <Task $run><svg width="16" height="14"><path d="M1 5L4 1H13L16 5L14 13H3L1 11Z" fill="#9a8577" /><path d="M2 3L7 1L13 2L15 5L6 5Z" fill="#b9c1c4" /><path d="M2 6H7V9H2Z" fill="#b9402e" /><path d="M8 5H12V8H8Z" fill="#5b9443" /><path d="M4 9H8V13H4Z" fill="#407d35" /><path d="M9 8H14V12H9Z" fill="#d37930" /></svg></Task>
        <Task $run $on $w={36}><Doc /></Task>
        <Tray>
          <TrayItem $w={20}><svg width="12" height="7"><path d="M.5 6.500L6 1L11.500 6.500" stroke="#fff" strokeWidth="1.200" fill="none" /></svg></TrayItem>
          <TrayItem $w={28}><svg width="16" height="12"><path d="M6 3.500H14.500V10.500H4.500V8" stroke="#fff" fill="none" /><path d="M15 5.500H16V8.500H15ZM0 2H5V5Q5 7 2.500 7Q0 7 0 5ZM1 0H2V2H1ZM3 0H4V2H3ZM7 5L11 9H6Z" fill="#fff" /><path d="M2.500 6V10.500H5" stroke="#fff" fill="none" /></svg></TrayItem>
          <TrayItem $w={20}><svg width="17" height="13"><path d="M.5 4.500H3L6.500 1V12L3 8.500H.5Z" stroke="#fff" fill="none" /><path d="M8.500 4.500Q10 6.500 8.500 8.500" stroke="#fff" fill="none" /><path d="M11 3Q13.500 6.500 11 10M13.500 1Q17.500 6.500 13.500 12" stroke="#888" fill="none" /></svg></TrayItem>
          <TrayItem $w={32}><svg width="13" height="13"><path d="M1 12.500A11.500 11.500 0 0 1 12.500 1" stroke="#aaa" fill="none" /><path d="M4 12.500A8.500 8.500 0 0 1 12.500 4M7 12.500A5.500 5.500 0 0 1 12.500 7" stroke="#fff" strokeWidth="1.400" fill="none" /><circle cx="11" cy="11" r="1.500" fill="#fff" /></svg></TrayItem>
          <TrayItem $w={24}><Text w={23}>ENG</Text></TrayItem>
          <TrayItem $w={51}><Text w={27}>13:32</Text></TrayItem>
          <TrayItem $w={27}><svg width="16" height="15"><path d="M.5 .5H15.500V11.500H11L8 14.500V11.500H.5Z" stroke="#fff" fill="none" strokeWidth="1.200" /></svg></TrayItem>
          <TrayItem $w={32} $ml={17}><svg width="30" height="20"><path d="M6 19Q1 19 1 14.500Q1 10.500 5 10Q6 4 12 4Q17 4 19 8Q25 8 26 13Q26 19 21 19ZM16 5Q18 1 22 1.500Q26 2 26 6Q29.500 7.500 29 11Q28 14 25 14.500" stroke="#fff" strokeWidth="1.800" fill="none" /></svg></TrayItem>
        </Tray>
      </Taskbar>
    </Window>
  );
}
